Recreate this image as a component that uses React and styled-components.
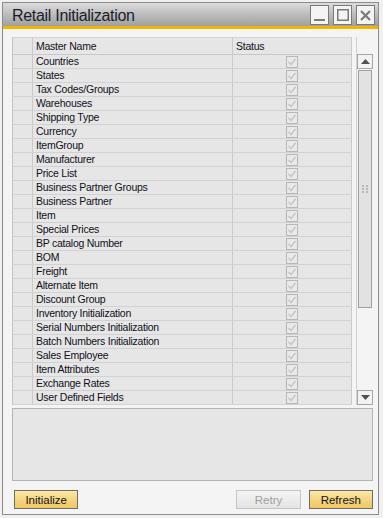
import styled, { createGlobalStyle } from "styled-components"

const Global = createGlobalStyle`
  html, body { margin: 0; padding: 0; background: #f0f0f0; }
  body { font-family: "Liberation Sans", Arial, sans-serif; }
`

const rows = [
  "Countries", "States", "Tax Codes/Groups", "Warehouses", "Shipping Type",
  "Currency", "ItemGroup", "Manufacturer", "Price List", "Business Partner Groups",
  "Business Partner", "Item", "Special Prices", "BP catalog Number", "BOM",
  "Freight", "Alternate Item", "Discount Group", "Inventory Initialization",
  "Serial Numbers Initialization", "Batch Numbers Initialization", "Sales Employee",
  "Item Attributes", "Exchange Rates", "User Defined Fields",
]

const Window = styled.div`
  margin: 2px 0 0 2px;
  width: 377px;
  height: 513px;
  border: 1px solid #8c8c8c;
  background: #f4f4f4;
  display: flex;
  flex-direction: column;
  box-sizing: border-box;
`
const TitleBar = styled.div`
  height: 23px;
  background: linear-gradient(#dcdcdc, #bcbcbc 50%, #a0a0a0);
  border-bottom: 3px solid #f2b500;
  display: flex;
  align-items: center;
  padding: 0 3px 0 9px;
`
const Title = styled.div`
  flex: 1;
  font-size: 16px;
  letter-spacing: -0.3px;
  color: #1c1c2c;
  padding-top: 2px;
`
const WinButtons = styled.div`
  display: flex;
  gap: 4px;
  margin-top: 1px;
`
const WinButton = styled.div`
  width: 17px;
  height: 18px;
  border: 1px solid #7a7a7a;
  background: #f4f4f4;
  display: flex;
  align-items: center;
  justify-content: center;
`
const Body = styled.div`
  flex: 1;
  display: flex;
  flex-direction: column;
  padding: 8px 4px 0 9px;
`
const GridArea = styled.div`
  display: flex;
  height: 368px;
`
const Grid = styled.div`
  width: 340px;
  border-left: 1px solid #c4c4c4;
  border-top: 1px solid #d4d4d4;
  background: #e6e6e6;
  box-sizing: border-box;
`
const Row = styled.div`
  display: grid;
  grid-template-columns: 20px 200px 119px;
  height: ${p => (p.$head ? 17 : 14)}px;
  border-bottom: 1px solid ${p => (p.$head ? "#c8c8c8" : "#d2d2d2")};
  box-sizing: border-box;
  font-size: 10.5px;
  letter-spacing: -0.25px;
  color: #101020;
`
const Cell = styled.div`
  border-right: 1px solid #cacaca;
  padding-left: ${p => (p.$pad ? 3 : 0)}px;
  display: flex;
  align-items: center;
  justify-content: ${p => (p.$center ? "center" : "flex-start")};
  white-space: nowrap;
  overflow: hidden;
  line-height: 13px;
`
const Check = styled.div`
  width: 12px;
  height: 12px;
  box-sizing: border-box;
  border: 1px solid #b6b6b6;
  background: #e9e9e9;
  display: flex;
  align-items: center;
  justify-content: center;
`
const Gutter = styled.div`
  width: 4px;
  border-right: 1px solid #d0d0d0;
`
const ScrollBar = styled.div`
  width: 16px;
  margin-top: 17px;
  display: flex;
  flex-direction: column;
`
const ArrowBtn = styled.div`
  height: 15px;
  border: 1px solid #a6a6a6;
  background: #f2f2f2;
  display: flex;
  align-items: center;
  justify-content: center;
  box-sizing: border-box;
`
const Track = styled.div`
  flex: 1;
  display: flex;
  flex-direction: column;
  padding: 1px 0;
`
const Thumb = styled.div`
  height: 236px;
  border: 1px solid #a0a0a0;
  background: #e2e2e2;
  margin: 0 1px;
  display: flex;
  align-items: center;
  justify-content: center;
`
const Message = styled.div`
  margin-top: 3px;
  width: 361px;
  height: 73px;
  box-sizing: border-box;
  border: 1px solid #b4b4b4;
  background: #e6e6e6;
`
const Footer = styled.div`
  display: flex;
  padding: 9px 0 0 2px;
  width: 359px;
`
const Button = styled.button`
  width: 65px;
  height: 19px;
  margin-left: ${p => p.$ml || 0}px;
  box-sizing: border-box;
  border: 1px solid ${p => (p.disabled ? "#c4c4c4" : "#6c6c6c")};
  background: ${p =>
    p.disabled ? "linear-gradient(#f4f4f4, #e4e4e4)" : "linear-gradient(#fbe9a6, #f3d27a 60%, #f0c860)"};
  color: ${p => (p.disabled ? "#a0a0a0" : "#141420")};
  font-family: "Liberation Sans", Arial, sans-serif;
  font-size: 11.5px;
  padding: 0;
`

const Triangle = ({ up }) => (
  <svg width="9" height="5" viewBox="0 0 9 5">
    <path d={up ? "M0 5 L4.5 0 L9 5Z" : "M0 0 L9 0 L4.5 5Z"} fill="#505050" />
  </svg>
)

const App = () => {
  return (
    <>
      <Global />
      <Window>
        <TitleBar>
          <Title>Retail Initialization</Title>
          <WinButtons>
            <WinButton>
              <svg width="11" height="11" viewBox="0 0 11 11"><rect x="0" y="9" width="11" height="2" fill="#7a7a7a" /></svg>
            </WinButton>
            <WinButton>
              <svg width="12" height="12" viewBox="0 0 12 12"><rect x="0.75" y="0.75" width="10.5" height="10.5" fill="none" stroke="#7a7a7a" strokeWidth="1.5" /></svg>
            </WinButton>
            <WinButton>
              <svg width="11" height="11" viewBox="0 0 11 11"><path d="M1 1 L10 10 M10 1 L1 10" stroke="#7a7a7a" strokeWidth="2.2" /></svg>
            </WinButton>
          </WinButtons>
        </TitleBar>
        <Body>
          <GridArea>
            <Grid>
              <Row $head>
                <Cell />
                <Cell $pad>Master Name</Cell>
                <Cell $pad>Status</Cell>
              </Row>
              {rows.map(r => (
                <Row key={r}>
                  <Cell />
                  <Cell $pad>{r}</Cell>
                  <Cell $center>
                    <Check>
                      <svg width="10" height="10" viewBox="0 0 10 10">
                        <path d="M1.5 5 L4 7.5 L8.5 2" fill="none" stroke="#c2c2c2" strokeWidth="1.2" />
                      </svg>
                    </Check>
                  </Cell>
                </Row>
              ))}
            </Grid>
            <Gutter />
            <ScrollBar>
              <ArrowBtn><Triangle up /></ArrowBtn>
              <Track>
                <Thumb>
                  <svg width="6" height="8" viewBox="0 0 6 8">
                    {[0, 3, 6].map(y => [0, 4].map(x => <rect key={x + "-" + y} x={x} y={y} width="2" height="2" fill="#b8b8b8" />))}
                  </svg>
                </Thumb>
              </Track>
              <ArrowBtn><Triangle /></ArrowBtn>
            </ScrollBar>
          </GridArea>
          <Message />
          <Footer>
            <Button>Initialize</Button>
            <Button disabled $ml={158}>Retry</Button>
            <Button $ml={8}>Refresh</Button>
          </Footer>
        </Body>
      </Window>
    </>
  )
}

export default App
